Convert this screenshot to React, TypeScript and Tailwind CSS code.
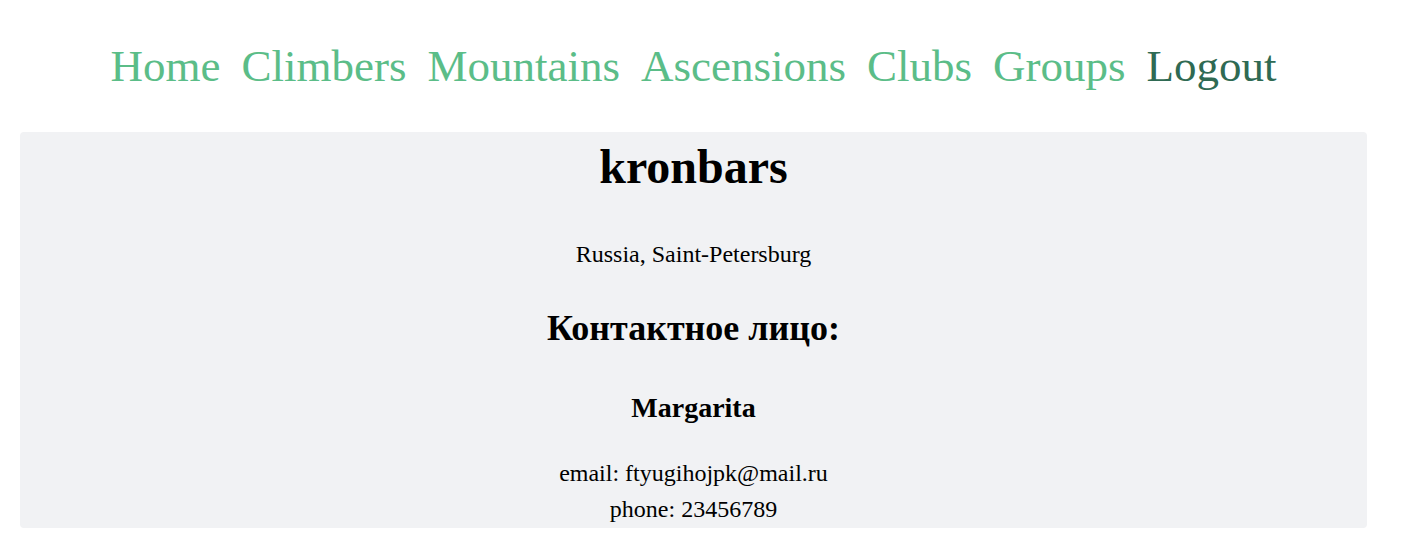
const links = ['Home', 'Climbers', 'Mountains', 'Ascensions', 'Clubs', 'Groups'];

const App = () => {
  return (
    <div className="w-[1387px] bg-white text-black font-['Liberation_Serif','Times_New_Roman',serif]">
      <nav className="pt-[40px] flex justify-center gap-[21px] text-[45px] leading-[52px]">
        {links.map((l) => (
          <a key={l} href="#" className="text-[#5bbd88]">
            {l}
          </a>
        ))}
        <a href="#" className="text-[#2f6a53]">
          Logout
        </a>
      </nav>

      <div className="mx-[20px] mt-[40px] pt-[7px] pb-[1px] rounded bg-[#f1f2f4] text-center">
        <h1 className="text-[48px] leading-[56px] font-bold">kronbars</h1>
        <p className="mt-[43px] text-[24px] leading-[33px]">Russia, Saint-Petersburg</p>
        <h2 className="mt-[36px] text-[36px] leading-[42px] font-bold">Контактное лицо:</h2>
        <h3 className="mt-[42px] text-[28px] leading-[34px] font-bold">Margarita</h3>
        <div className="mt-[30px] text-[24px] leading-[36px]">
          <p>email: ftyugihojpk@mail.ru</p>
          <p>phone: 23456789</p>
        </div>
      </div>
    </div>
  );
};

export default App;
